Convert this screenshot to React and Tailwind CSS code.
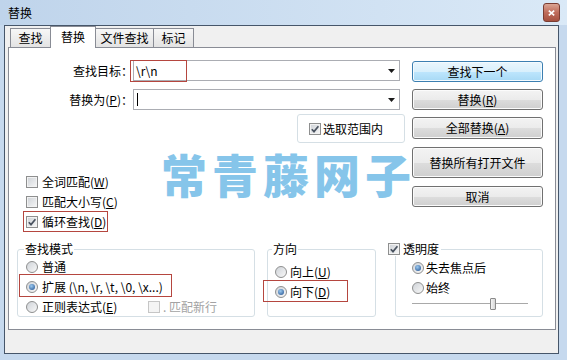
import React from 'react'

const btnBase =
  "w-[131px] flex items-center justify-center rounded-[3px] border border-[#707070] bg-[linear-gradient(to_bottom,#f3f3f3_0%,#ebebeb_50%,#dddddd_51%,#cfcfcf_100%)] shadow-[inset_0_0_0_1px_#fbfbfb]"
const btnFocus =
  "w-[131px] flex items-center justify-center rounded-[3px] border border-[#3c7fb1] bg-[linear-gradient(to_bottom,#eaf6fd_0%,#d9f0fc_50%,#bee6fd_51%,#a7d9f5_100%)] shadow-[inset_0_0_0_1px_#f4fbff]"

function Acc({ k }) {
  return (
    <>
      (<span className="underline underline-offset-1">{k}</span>)
    </>
  )
}

function Check({ checked, disabled }) {
  return (
    <span
      className={
        disabled
          ? "w-[12px] h-[12px] shrink-0 border border-[#c6c6c6] bg-[#f4f4f4] flex items-center justify-center"
          : "w-[12px] h-[12px] shrink-0 border border-[#8e8f8f] bg-[linear-gradient(135deg,#cdd1d6,#f7f7f7)] shadow-[inset_0_0_0_1px_#f2f2f2] flex items-center justify-center"
      }
    >
      {checked && (
        <svg width="10" height="10" viewBox="0 0 10 10">
          <path d="M1.8 5.2 L4 7.6 L8.4 2.2" fill="none" stroke="#4a5360" strokeWidth="1.7" />
        </svg>
      )}
    </span>
  )
}

function Radio({ checked }) {
  return (
    <span className="w-[12px] h-[12px] shrink-0 rounded-full border border-[#8e8f8f] bg-[linear-gradient(135deg,#cfd3d8,#f8f8f8)] flex items-center justify-center">
      {checked && (
        <span className="w-[6px] h-[6px] rounded-full bg-[radial-gradient(circle_at_40%_35%,#9ccaf0,#1d4c8c)]" />
      )}
    </span>
  )
}

function Combo({ children }) {
  return (
    <div className="w-[267px] h-[21px] border border-[#abadb3] bg-white flex items-center pl-[2px] pr-[4px]">
      {children}
      <svg className="ml-auto" width="7" height="4" viewBox="0 0 7 4">
        <path d="M0 0 H7 L3.5 4 Z" fill="#1a1a1a" />
      </svg>
    </div>
  )
}

export default function App() {
  return (
    <div className="relative w-[567px] h-[360px] overflow-hidden bg-[#c6d9ee] font-['Noto_Sans_CJK_SC',sans-serif] text-[12px] text-black flex flex-col">
      {/* title bar */}
      <div className="h-[25px] shrink-0 flex items-center pl-[8px] pr-[7px] bg-gradient-to-r from-[#bfd4eb] to-[#dae9f7]">
        <span className="leading-none">替换</span>
        <div className="ml-auto w-[17px] h-[19px] rounded-[3px] border border-[#7a3d33] bg-[linear-gradient(to_bottom,#dba594,#bf6c5b_50%,#a5503f)] flex items-center justify-center">
          <svg width="7" height="6" viewBox="0 0 7 6">
            <path d="M0.8 0.6 L6.2 5.4 M6.2 0.6 L0.8 5.4" stroke="#fff" strokeWidth="1.6" />
          </svg>
        </div>
      </div>

      {/* client */}
      <div className="ml-[4px] mr-[8px] h-[329px] shrink-0 border border-[#46566a] bg-[#f0f0f0] flex flex-col">
        {/* tabs */}
        <div className="relative z-10 h-[22px] -mb-px flex items-end pl-[5px]">
          <div className="w-[41px] h-[20px] border border-[#898c95] flex items-center justify-center bg-[linear-gradient(to_bottom,#f7f7f7,#e3e3e3)]">查找</div>
          <div className="-ml-px w-[46px] h-[22px] border border-b-0 border-[#898c95] bg-white flex items-center justify-center pb-[1px]">替换</div>
          <div className="-ml-px w-[59px] h-[20px] border border-[#898c95] flex items-center justify-center bg-[linear-gradient(to_bottom,#f7f7f7,#e3e3e3)]">文件查找</div>
          <div className="-ml-px w-[41px] h-[20px] border border-[#898c95] flex items-center justify-center bg-[linear-gradient(to_bottom,#f7f7f7,#e3e3e3)]">标记</div>
        </div>

        {/* panel */}
        <div className="relative ml-[3px] w-[548px] h-[283px] shrink-0 border border-[#898c95] bg-white flex flex-col">
          <div className="flex-1 flex">
            {/* left column */}
            <div className="w-[396px] flex flex-col">
              <div className="mt-[12px] h-[21px] flex items-center">
                <span className="w-[124px] text-right">查找目标：</span>
                <Combo>
                  <span className="leading-none">{"\\r\\n"}</span>
                </Combo>
              </div>
              <div className="mt-[8px] h-[21px] flex items-center">
                <span className="w-[124px] text-right">
                  替换为<Acc k="P" />：
                </span>
                <Combo>
                  <span className="ml-[1px] w-px h-[13px] bg-black" />
                </Combo>
              </div>
              <div className="mt-[4px] ml-[288px] w-[108px] h-[29px] rounded-[3px] border border-[#d5dfe5] flex items-center gap-[2px] pl-[11px]">
                <Check checked />
                <span>选取范围内</span>
              </div>
              <div className="mt-[29px] ml-[17px] flex flex-col">
                <div className="h-[20px] flex items-center gap-[4px]">
                  <Check />
                  <span>
                    全词匹配<Acc k="W" />
                  </span>
                </div>
                <div className="h-[20px] flex items-center gap-[4px]">
                  <Check />
                  <span>
                    匹配大小写<Acc k="C" />
                  </span>
                </div>
                <div className="h-[20px] flex items-center gap-[4px]">
                  <Check checked />
                  <span>
                    循环查找<Acc k="D" />
                  </span>
                </div>
              </div>
            </div>

            {/* buttons */}
            <div className="ml-[7px] pt-[13px] flex flex-col">
              <div className={`${btnFocus} h-[21px]`}>查找下一个</div>
              <div className={`${btnBase} h-[21px] mt-[7px]`}>
                <span>
                  替换<Acc k="R" />
                </span>
              </div>
              <div className={`${btnBase} h-[22px] mt-[7px]`}>
                <span>
                  全部替换<Acc k="A" />
                </span>
              </div>
              <div className={`${btnBase} h-[31px] mt-[8px]`}>替换所有打开文件</div>
              <div className={`${btnBase} h-[21px] mt-[8px]`}>取消</div>
            </div>
          </div>

          {/* group boxes */}
          <div className="flex pl-[8px] pb-[12px]">
            <div className="relative w-[238px] h-[68px] rounded-[3px] border border-[#d5dfe5] pt-[7px] pl-[8px]">
              <span className="absolute -top-[8px] left-[6px] px-[1px] bg-white leading-[14px]">查找模式</span>
              <div className="h-[20px] flex items-center gap-[4px]">
                <Radio />
                <span>普通</span>
              </div>
              <div className="h-[20px] flex items-center gap-[4px]">
                <Radio checked />
                <span>{"扩展 (\\n, \\r, \\t, \\0, \\x...)"}</span>
              </div>
              <div className="h-[20px] flex items-center">
                <Radio />
                <span className="ml-[4px] w-[106px]">
                  正则表达式<Acc k="E" />
                </span>
                <Check disabled />
                <span className="ml-[3px] text-[#a3a3a3]">. 匹配新行</span>
              </div>
            </div>

            <div className="relative ml-[12px] w-[109px] h-[68px] rounded-[3px] border border-[#d5dfe5] pt-[12px] pl-[7px]">
              <span className="absolute -top-[8px] left-[4px] px-[1px] bg-white leading-[14px]">方向</span>
              <div className="h-[20px] flex items-center gap-[3px]">
                <Radio />
                <span>
                  向上<Acc k="U" />
                </span>
              </div>
              <div className="h-[20px] flex items-center gap-[3px]">
                <Radio checked />
                <span>
                  向下<Acc k="D" />
                </span>
              </div>
            </div>

            <div className="relative ml-[19px] w-[148px] h-[68px] rounded-[3px] border border-[#d5dfe5] pt-[8px] pl-[16px]">
              <span className="absolute -top-[8px] -left-[8px] pr-[2px] bg-white leading-[14px] flex items-center gap-[3px]">
                <Check checked />
                <span>透明度</span>
              </span>
              <div className="h-[20px] flex items-center gap-[2px]">
                <Radio checked />
                <span>失去焦点后</span>
              </div>
              <div className="h-[20px] flex items-center gap-[2px]">
                <Radio />
                <span>始终</span>
              </div>
              <div className="relative w-[116px] h-[12px] flex items-center">
                <div className="w-full h-[2px] border-t border-[#a9a9a9] border-b border-b-[#ffffff] bg-[#e3e3e3]" />
                <div className="absolute left-[78px] top-0 w-[6px] h-[12px] border border-[#8a8a8a] rounded-[1px] bg-[linear-gradient(to_right,#f4f4f4,#d6d6d6)]" />
              </div>
            </div>
          </div>

          {/* watermark */}
          <div className="absolute left-[152px] top-[102px] text-[46px] leading-none font-black tracking-[5px] text-[#86c5ea] whitespace-nowrap pointer-events-none">
            常青藤网子
          </div>
        </div>
      </div>

      {/* annotation boxes */}
      <div className="absolute left-[130px] top-[60px] w-[57px] h-[22px] border border-[#b5463f] pointer-events-none" />
      <div className="absolute left-[23px] top-[211px] w-[85px] h-[21px] border border-[#b5463f] pointer-events-none" />
      <div className="absolute left-[19px] top-[274px] w-[153px] h-[23px] border border-[#b5463f] pointer-events-none" />
      <div className="absolute left-[263px] top-[280px] w-[85px] h-[22px] border border-[#b5463f] pointer-events-none" />
    </div>
  )
}
